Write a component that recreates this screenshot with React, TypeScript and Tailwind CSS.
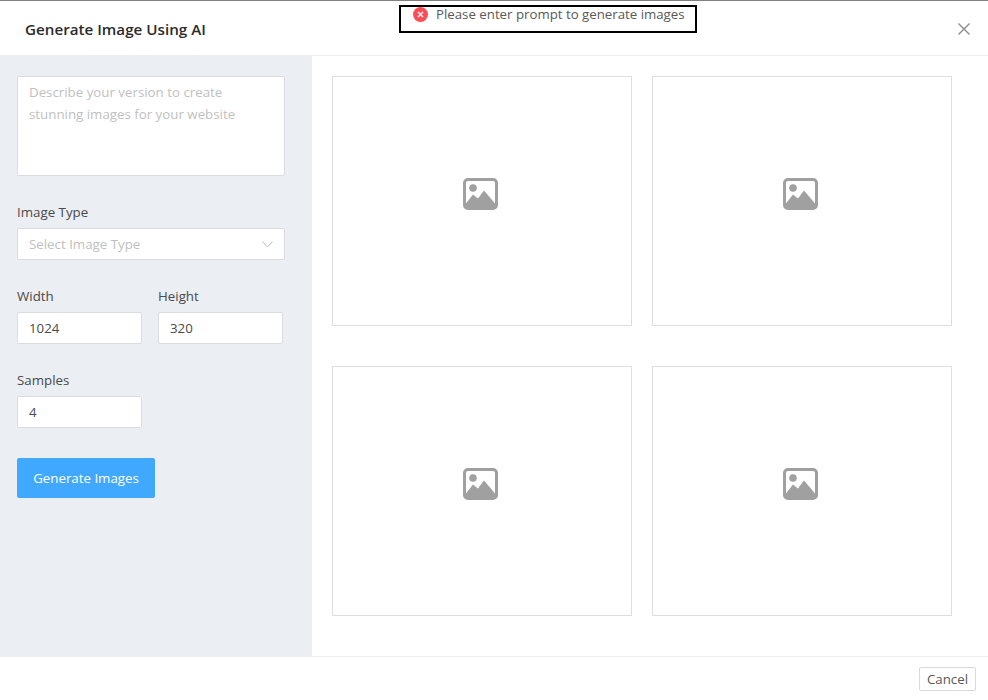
const FONT = "font-['Open_Sans',sans-serif]";

function ImageIcon() {
  return (
    <svg width="35" height="32" viewBox="0 0 35 32" className="block">
      <rect x="1.5" y="1.5" width="32" height="29" rx="3.5" fill="none" stroke="#a0a0a0" strokeWidth="3" />
      <circle cx="10" cy="10" r="3.8" fill="#a0a0a0" />
      <path d="M2.5 29 L2.5 26 L10 16.5 L15 20.5 L21 12.5 L32.5 26 L32.5 29 Z" fill="#a0a0a0" />
    </svg>
  );
}

function Placeholder() {
  return (
    <div className="flex h-[250px] w-[300px] items-center justify-center border border-[#dddde8] bg-white pb-[14px] pr-[3px]">
      <ImageIcon />
    </div>
  );
}

function Field({ label, value, className }: { label: string; value: string; className: string }) {
  return (
    <div className={className}>
      <div className="mb-[6px] h-[20px] text-[13.3px] leading-[20px] text-[#4a4a4a]">{label}</div>
      <div className="flex h-[32px] items-center rounded-[2px] border border-[#dadce0] bg-white px-[11px] pt-[2px] text-[13.3px] text-[#4a4a4a]">
        {value}
      </div>
    </div>
  );
}

export default function App() {
  return (
    <div className={`relative flex h-[700px] w-[988px] flex-col overflow-hidden border-t border-[#808080] bg-white ${FONT}`}>
      <header className="flex h-[55px] shrink-0 items-center justify-between border-b border-[#eeeeee] pl-[25px] pr-[18px]">
        <h1 className="mt-[2px] text-[15.2px] font-semibold text-[#2b2b2b]">Generate Image Using AI</h1>
        <svg width="12" height="12" viewBox="0 0 12 12" className="mt-[2px]">
          <path d="M0.5 0.5 L11.5 11.5 M11.5 0.5 L0.5 11.5" stroke="#8c8c8c" strokeWidth="1.4" fill="none" />
        </svg>
      </header>

      <div className="absolute left-[399px] top-[4px] flex h-[28px] w-[298px] items-start border-2 border-black pl-[12px]">
        <span className="flex h-[15px] w-[15px] items-center justify-center rounded-full bg-[#ff4d57]">
          <svg width="7" height="7" viewBox="0 0 7 7">
            <path d="M1 1 L6 6 M6 1 L1 6" stroke="#ffffff" strokeWidth="1.4" fill="none" />
          </svg>
        </span>
        <span className="ml-[8px] -mt-[2px] whitespace-nowrap text-[13.25px] leading-[18px] text-[#595959]">Please enter prompt to generate images</span>
      </div>

      <main className="flex h-[600px] shrink-0">
        <aside className="w-[312px] shrink-0 bg-[#ebeef3] pl-[17px] pt-[20px]">
          <div className="h-[100px] w-[268px] rounded-[2px] border border-[#dadce0] bg-white px-[11px] py-[4px] text-[13.3px] leading-[22px] text-[#bfbfbf]">
            Describe your version to create stunning images for your website
          </div>

          <div className="mt-[26px] h-[20px] text-[13.3px] leading-[20px] text-[#4a4a4a]">Image Type</div>
          <div className="mt-[6px] flex h-[32px] w-[268px] items-center justify-between rounded-[2px] border border-[#dadce0] bg-white pl-[11px] pr-[11px] text-[13.3px] text-[#bfbfbf]">
            <span className="mt-[1px]">Select Image Type</span>
            <svg width="11" height="7" viewBox="0 0 11 7">
              <path d="M0.5 0.5 L5.5 6 L10.5 0.5" stroke="#bfbfbf" strokeWidth="1" fill="none" />
            </svg>
          </div>

          <div className="mt-[26px] flex gap-[16px]">
            <Field label="Width" value="1024" className="w-[125px]" />
            <Field label="Height" value="320" className="w-[125px]" />
          </div>

          <Field label="Samples" value="4" className="mt-[26px] w-[125px]" />

          <button className="mt-[30px] h-[40px] w-[138px] rounded-[2px] bg-[#40a9ff] pt-[2px] text-[13.3px] text-white">
            Generate Images
          </button>
        </aside>

        <section className="grid flex-1 grid-cols-[300px_300px] content-start gap-x-[20px] gap-y-[40px] pl-[20px] pt-[20px]">
          <Placeholder />
          <Placeholder />
          <Placeholder />
          <Placeholder />
        </section>
      </main>

      <footer className="flex flex-1 items-start justify-end border-t border-[#eeeeee] pr-[12px] pt-[10px]">
        <button className="h-[24px] w-[57px] rounded-[2px] border border-[#d9d9d9] bg-white pt-[2px] text-[13.3px] leading-none text-[#595959]">
          Cancel
        </button>
      </footer>
    </div>
  );
}
